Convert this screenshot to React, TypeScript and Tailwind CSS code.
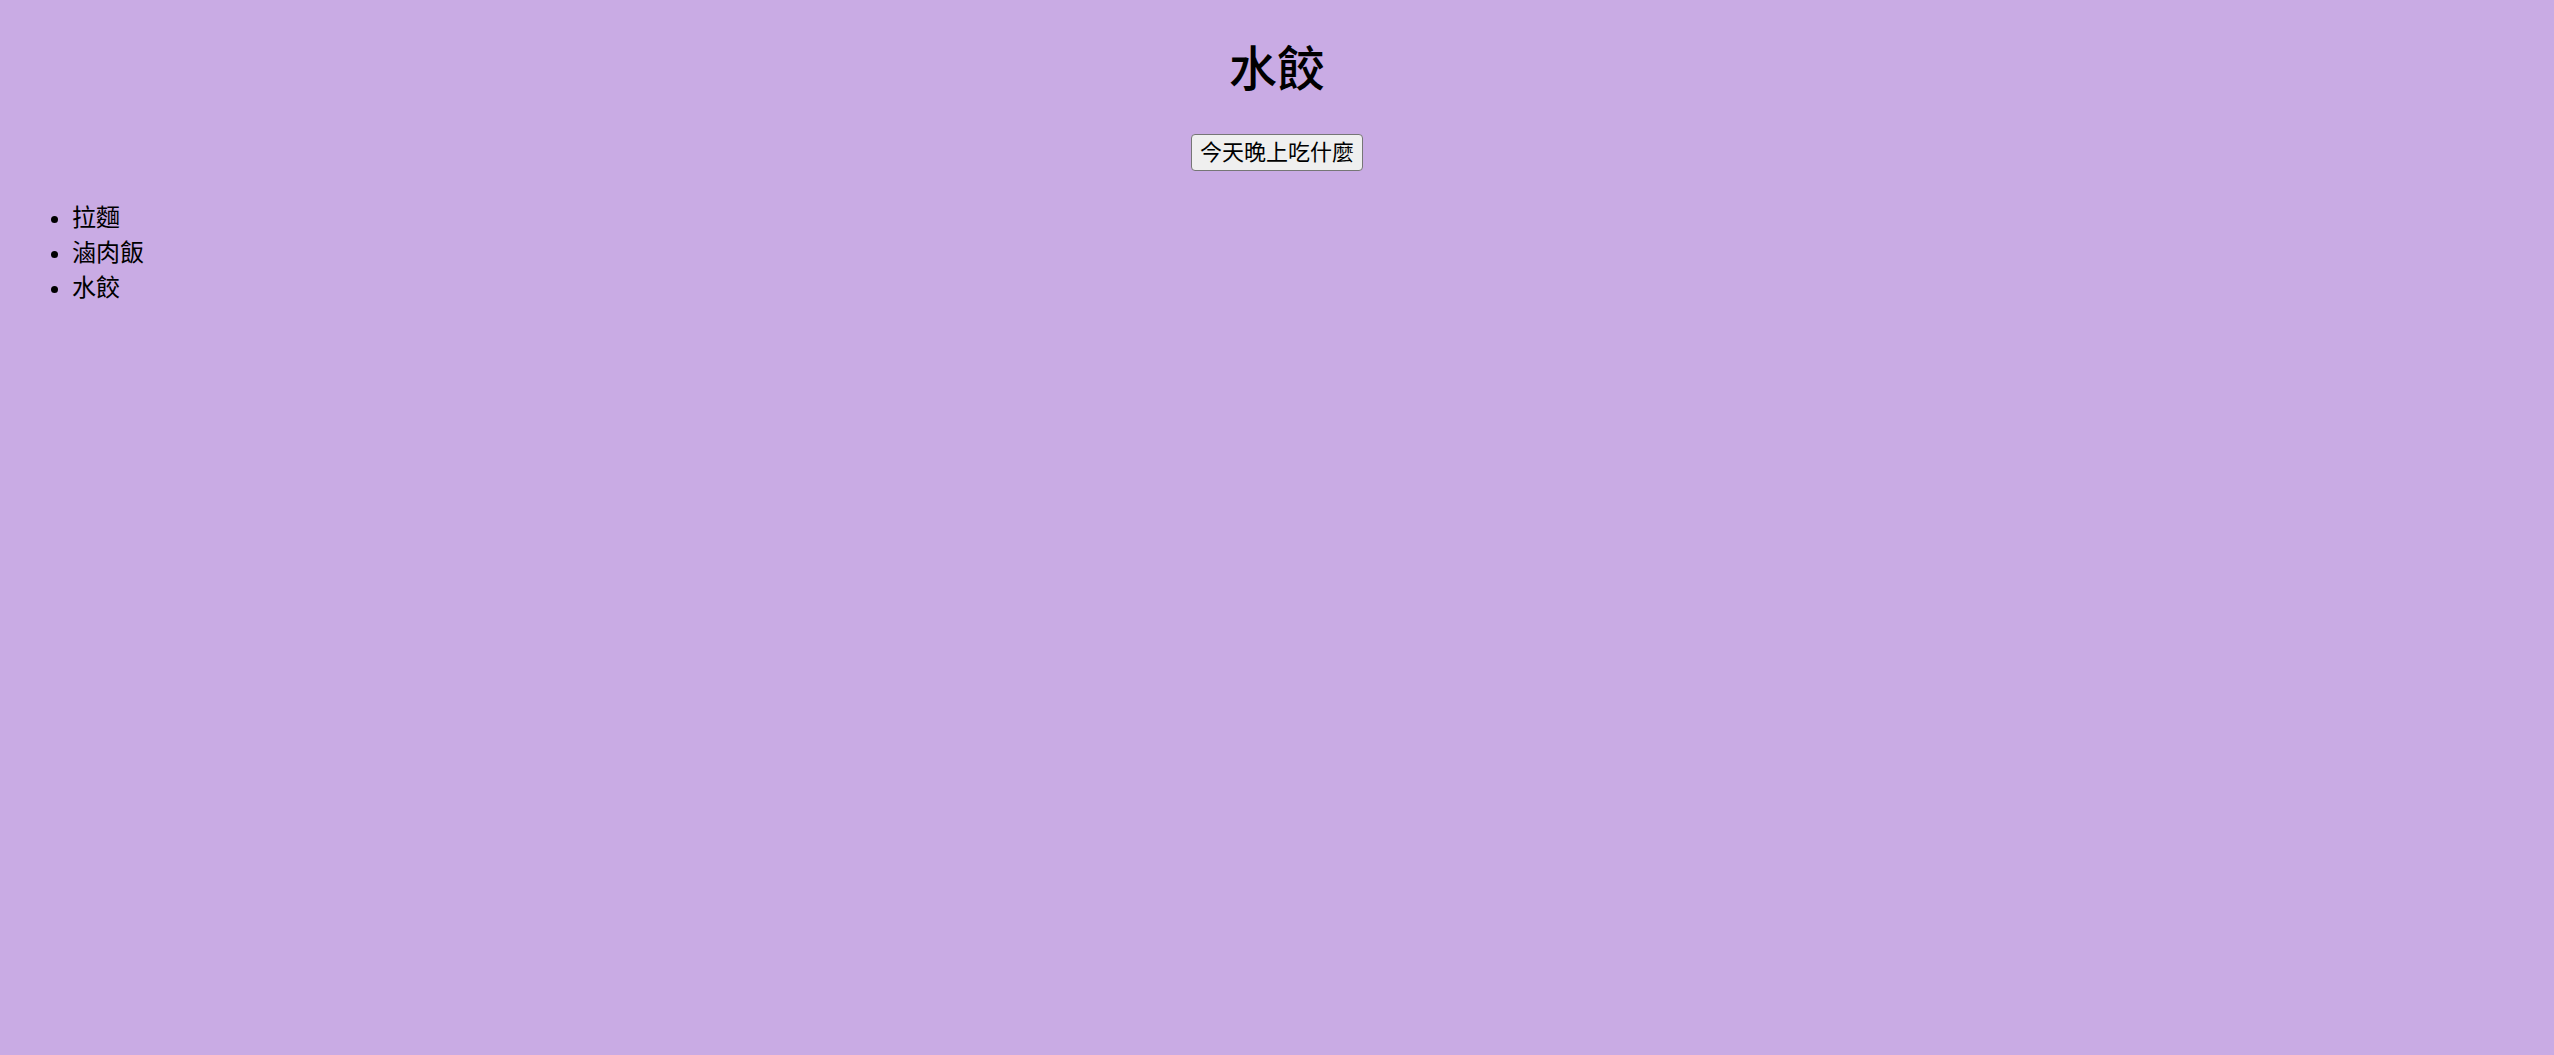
import React from 'react'

const foods = ['拉麵', '滷肉飯', '水餃']

export default function App() {
  return (
    <div className="min-h-[1055px] bg-[#c9abe4] px-3 pt-[1px] text-black [font-family:'Liberation_Sans','Noto_Sans_CJK_TC',sans-serif]">
      {/* title */}
      <h1 className="mt-[37px] mb-8 text-center text-[48px] font-medium leading-[64px]">水餃</h1>

      <div className="flex justify-center">
        <button className="h-[37px] rounded-[4px] border-[1.5px] border-[#767676] bg-[#efefef] px-[8px] text-[22px] leading-[26px]">
          今天晚上吃什麼
        </button>
      </div>

      <ul className="mt-[29px] list-disc pl-[60px] text-[24px] leading-[35px]">
        {foods.map((f) => (
          <li key={f}>{f}</li>
        ))}
      </ul>
    </div>
  )
}
